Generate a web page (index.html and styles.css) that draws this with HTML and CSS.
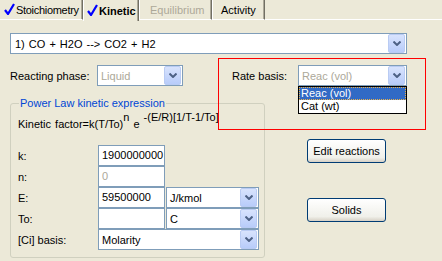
FILE: index.html
```html
<!DOCTYPE html>
<html lang="en">
<head>
  <meta charset="UTF-8" />
  <title>Kinetic</title>
  <link rel="stylesheet" href="styles.css">
</head>
<body>

  <div class="tabs">
    <div class="tab tab-stoich">
      <svg class="check" width="11" height="12" viewBox="0 0 11 12"><polyline points="1,7 4,11 10,1" fill="none" stroke="#0000ff" stroke-width="2.2"/></svg>Stoichiometry
    </div>
    <div class="tab tab-kinetic active">
      <svg class="check" width="11" height="12" viewBox="0 0 11 12"><polyline points="1,7 4,11 10,1" fill="none" stroke="#0000ff" stroke-width="2.2"/></svg>Kinetic
    </div>
    <div class="tab tab-equil disabled">Equilibrium</div>
    <div class="tab tab-activity">Activity</div>
    <div class="tab-fill"></div>
  </div>

  <div class="combo reaction-combo">
    <span class="combo-text">1) CO + H2O --&gt; CO2 + H2</span>
    <span class="combo-btn"><svg width="8" height="5" viewBox="0 0 8 5"><polyline points="0.5,0.5 4,4 7.5,0.5" fill="none" stroke="#4d6185" stroke-width="2"/></svg></span>
  </div>

  <div class="phase-row">
    <label class="phase-label">Reacting phase:</label>
    <div class="combo phase-combo">
      <span class="combo-text muted">Liquid</span>
      <span class="combo-btn"><svg width="8" height="5" viewBox="0 0 8 5"><polyline points="0.5,0.5 4,4 7.5,0.5" fill="none" stroke="#4d6185" stroke-width="2"/></svg></span>
    </div>
    <label class="rate-label">Rate basis:</label>
    <div class="combo rate-combo">
      <span class="combo-text muted">Reac (vol)</span>
      <span class="combo-btn"><svg width="8" height="5" viewBox="0 0 8 5"><polyline points="0.5,0.5 4,4 7.5,0.5" fill="none" stroke="#4d6185" stroke-width="2"/></svg></span>
      <ul class="dropdown">
        <li class="selected">Reac (vol)</li>
        <li>Cat (wt)</li>
      </ul>
    </div>
  </div>

  <div class="lower">
    <fieldset class="group">
      <legend>Power Law kinetic expression</legend>
      <div class="formula">Kinetic factor=k(T/To)<sup>n</sup> e <sup>-(E/R)[1/T-1/To]</sup></div>

      <div class="params">
        <span class="p-label">k:</span>
        <div class="field">1900000000</div>
        <span></span>

        <span class="p-label">n:</span>
        <div class="field muted">0</div>
        <span></span>

        <span class="p-label">E:</span>
        <div class="field">59500000</div>
        <div class="combo unit-combo">
          <span class="combo-text">J/kmol</span>
          <span class="combo-btn"><svg width="8" height="5" viewBox="0 0 8 5"><polyline points="0.5,0.5 4,4 7.5,0.5" fill="none" stroke="#4d6185" stroke-width="2"/></svg></span>
        </div>

        <span class="p-label">To:</span>
        <div class="field"></div>
        <div class="combo unit-combo">
          <span class="combo-text">C</span>
          <span class="combo-btn"><svg width="8" height="5" viewBox="0 0 8 5"><polyline points="0.5,0.5 4,4 7.5,0.5" fill="none" stroke="#4d6185" stroke-width="2"/></svg></span>
        </div>

        <span class="p-label">[Ci] basis:</span>
        <div class="combo basis-combo">
          <span class="combo-text">Molarity</span>
          <span class="combo-btn"><svg width="8" height="5" viewBox="0 0 8 5"><polyline points="0.5,0.5 4,4 7.5,0.5" fill="none" stroke="#4d6185" stroke-width="2"/></svg></span>
        </div>
      </div>
    </fieldset>

    <div class="buttons">
      <button class="btn">Edit reactions</button>
      <button class="btn btn-solids">Solids</button>
    </div>
  </div>

  <div class="highlight"></div>

</body>
</html>
```

FILE: styles.css
```css
body {
  margin: 0;
  background: #ece9d8;
  font-family: "Liberation Sans", Arial, sans-serif;
  font-size: 11px;
  color: #000;
  position: relative;
  height: 261px;
  overflow: hidden;
}

/* tabs */
.tabs {
  display: flex;
  height: 20px;
}

.tab {
  box-sizing: border-box;
  height: 20px;
  border-left: 1px solid #fff;
  border-right: 1px solid #716f64;
  border-bottom: 1px solid #fff;
  box-shadow: inset -1px 0 #aca899;
  display: flex;
  align-items: center;
  padding-left: 3px;
  white-space: nowrap;
}

.tab .check {
  margin-right: 1px;
  margin-top: -2px;
}

.tab-stoich { width: 83px; border-left: none; padding-left: 4px; letter-spacing: -0.3px; }
.tab-kinetic { width: 56px; font-weight: bold; border-bottom: none; height: 21px; }
.tab-equil { width: 73px; padding-left: 10px; }
.tab-activity { width: 53px; padding-left: 8px; }

.tab.disabled { color: #aca899; }

.tab-fill {
  flex: 1;
  border-bottom: 1px solid #fff;
  height: 19px;
}

/* combos */
.combo {
  box-sizing: border-box;
  height: 21px;
  border: 1px solid #7f9db9;
  background: #fff;
  display: flex;
  align-items: center;
  position: relative;
}

.combo-text {
  flex: 1;
  padding-left: 3px;
  white-space: nowrap;
  overflow: hidden;
}

.combo-btn {
  width: 15px;
  height: 17px;
  margin-right: 1px;
  border: 1px solid #b9cbf3;
  border-radius: 2px;
  background: linear-gradient(#d8e3fd, #b8ccfa);
  display: flex;
  align-items: center;
  justify-content: center;
}

.muted { color: #aca899; }

.reaction-combo {
  margin: 13px 0 0 10px;
  width: 397px;
}

.reaction-combo .combo-text { padding-left: 4px; word-spacing: 1px; }

/* phase / rate basis row */
.phase-row {
  display: flex;
  align-items: center;
  margin-top: 11px;
  padding-left: 10px;
  height: 21px;
}

.phase-label { width: 87px; }
.phase-combo { width: 86px; }
.rate-label { width: 66px; margin-left: 49px; }
.rate-combo { width: 109px; }

.dropdown {
  position: absolute;
  left: -1px;
  top: 20px;
  width: 109px;
  box-sizing: border-box;
  margin: 0;
  padding: 0;
  list-style: none;
  border: 1px solid #000;
  background: #fff;
  z-index: 2;
}

.dropdown li {
  height: 13px;
  line-height: 13px;
  padding-left: 2px;
}

.dropdown li.selected {
  background: #316ac5;
  color: #fff;
  outline: 1px dotted #e8b048;
  outline-offset: -1px;
}

/* lower part */
.lower {
  display: flex;
  align-items: flex-start;
  margin-top: 11px;
}

.group {
  box-sizing: border-box;
  margin: 0 0 0 10px;
  width: 255px;
  height: 161px;
  border: 1px solid #d0d0bf;
  border-radius: 3px;
  padding: 0 0 0 7px;
}

.group legend {
  color: #0046d5;
  padding: 0 1px;
  margin-left: 1px;
  line-height: 13px;
}

.formula {
  margin-top: 7px;
  white-space: nowrap;
  line-height: 13px;
  word-spacing: 1px;
}

.formula sup {
  font-size: 11px;
  vertical-align: 7px;
  line-height: 0;
}

.params {
  display: grid;
  grid-template-columns: 79px 67px 93px;
  grid-auto-rows: 21px;
  column-gap: 1px;
  margin-top: 14px;
  align-items: center;
}

.field {
  box-sizing: border-box;
  height: 21px;
  border: 1px solid #7f9db9;
  background: #fff;
  padding-left: 3px;
  line-height: 19px;
}

.unit-combo { width: 93px; }

.basis-combo {
  grid-column: 2 / 4;
}

/* buttons */
.buttons {
  display: flex;
  flex-direction: column;
  margin-left: 42px;
  padding-top: 42px;
  gap: 35px;
}

.btn {
  width: 79px;
  height: 24px;
  font-family: inherit;
  font-size: 11px;
  border: 1px solid #003c74;
  border-radius: 3px;
  background: linear-gradient(#ffffff, #f0f0ea 80%, #d6d0c5);
  padding: 0;
  color: #000;
}

/* annotation box */
.highlight {
  position: absolute;
  left: 218px;
  top: 58px;
  width: 206px;
  height: 70px;
  border: 1px solid #ff0000;
  pointer-events: none;
}
```
